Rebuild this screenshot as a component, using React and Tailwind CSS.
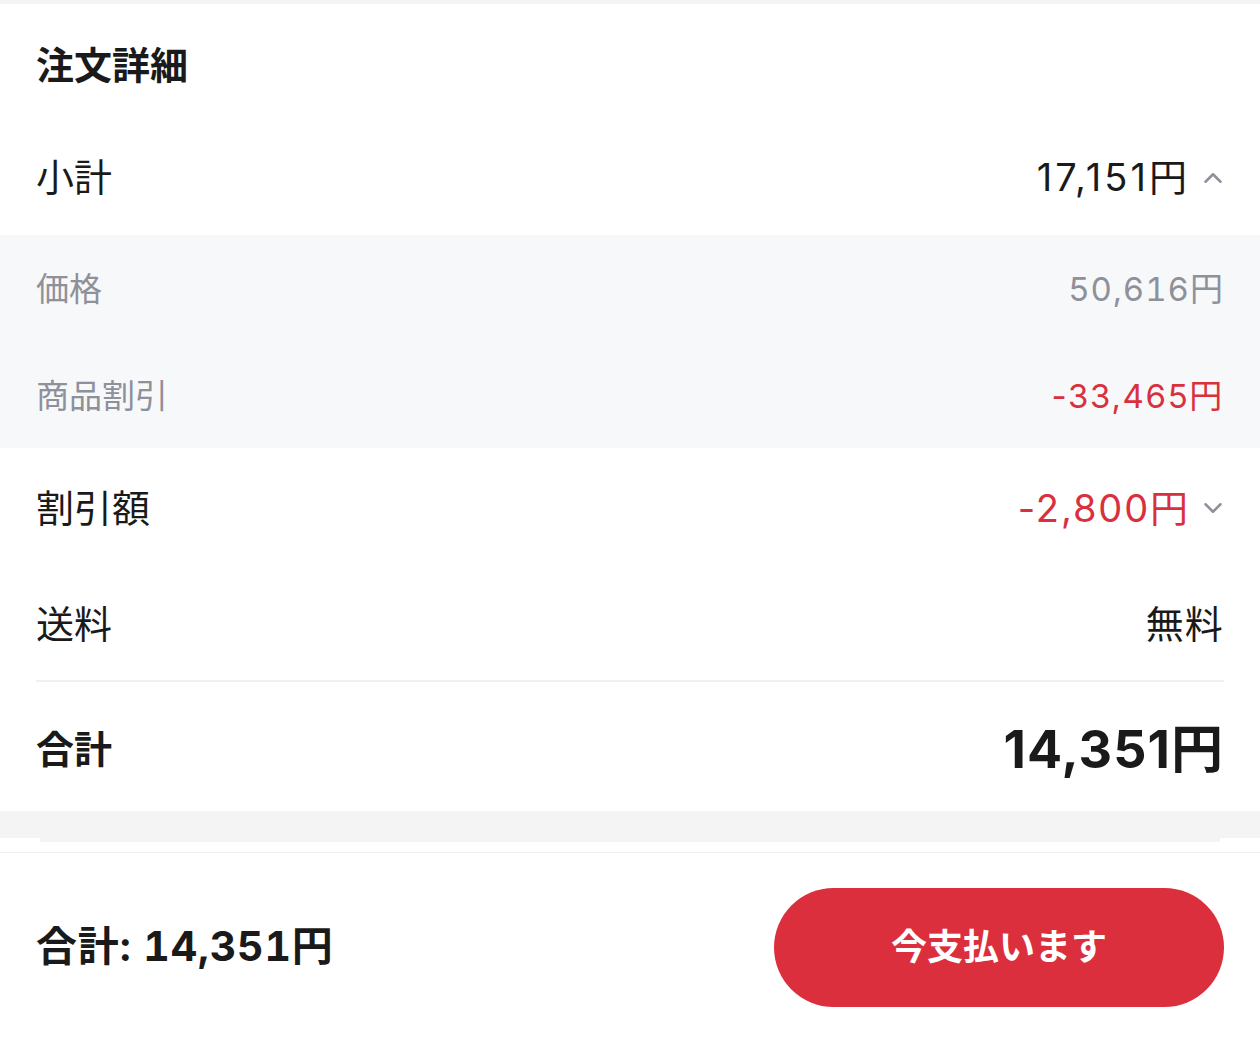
import { ChevronUp, ChevronDown } from 'lucide-react'

const font = { fontFamily: "Inter, 'Noto Sans CJK JP', sans-serif" }

function Row({ label, value, className = '', valueClass = 'tabular-nums tracking-[0.03em]', chevron, h = 'h-[115px]' }) {
  return (
    <div className={`flex items-center justify-between px-[36px] ${h} ${className}`}>
      <span>{label}</span>
      <span className={`flex items-center ${valueClass}`}>
        {value}
        {chevron === 'up' && <ChevronUp className="ml-[8px] mr-[-4px] text-[#8e909a]" size={30} strokeWidth={2} />}
        {chevron === 'down' && <ChevronDown className="ml-[8px] mr-[-4px] text-[#8e909a]" size={30} strokeWidth={2} />}
      </span>
    </div>
  )
}

export default function App() {
  return (
    <div className="bg-white text-[#1a1a1a] min-h-[1060px]" style={font}>
      <div className="h-[4px] bg-[#f4f4f4]" />
      <div className="bg-white">
        <div className="flex items-center h-[116px] px-[36px] pt-[6px] text-[38px] font-bold">注文詳細</div>
        <Row label="小計" value="17,151円" chevron="up" className="text-[38px]" valueClass="tracking-[0.08em]" />
        <div className="bg-[#f7f8fa] text-[33px] text-[#8e909a]">
          <Row label="価格" value="50,616円" h="h-[106px] pt-[4px]" />
          <Row label="商品割引" value="-33,465円" valueClass="tracking-[0.05em] text-[#d9303e]" h="h-[107px] pt-[4px]" />
        </div>
        <Row label="割引額" value="-2,800円" chevron="down" valueClass="tracking-[0.05em] text-[#d9303e]" className="text-[38px]" h="h-[118px] pt-[2px]" />
        <Row label="送料" value="無料" className="text-[38px]" h="h-[114px] pt-[2px]" />
        <div className="mx-[36px] h-[2px] bg-[#f0f0f0]" />
        <div className="flex items-center justify-between px-[36px] h-[129px] pt-[6px]">
          <span className="text-[38px] font-bold">合計</span>
          <span className="text-[52px] font-bold tracking-[0.02em]">14,351円</span>
        </div>
      </div>
      <div className="h-[27px] bg-[#f4f4f4]" />
      <div className="mx-[40px] h-[4px] bg-[#f4f4f4]" />
      <div className="bg-white pt-[10px]">
        <div className="h-[1px] bg-[#efefef]" />
        <div className="flex items-center justify-between px-[36px] h-[190px] pb-[2px]">
          <span className="text-[41px] font-bold tabular-nums tracking-[0.02em]">合計: 14,351円</span>
          <button className="w-[450px] h-[119px] rounded-full bg-[#dc2f3d] text-white text-[36px] font-bold">今支払います</button>
        </div>
      </div>
    </div>
  )
}
